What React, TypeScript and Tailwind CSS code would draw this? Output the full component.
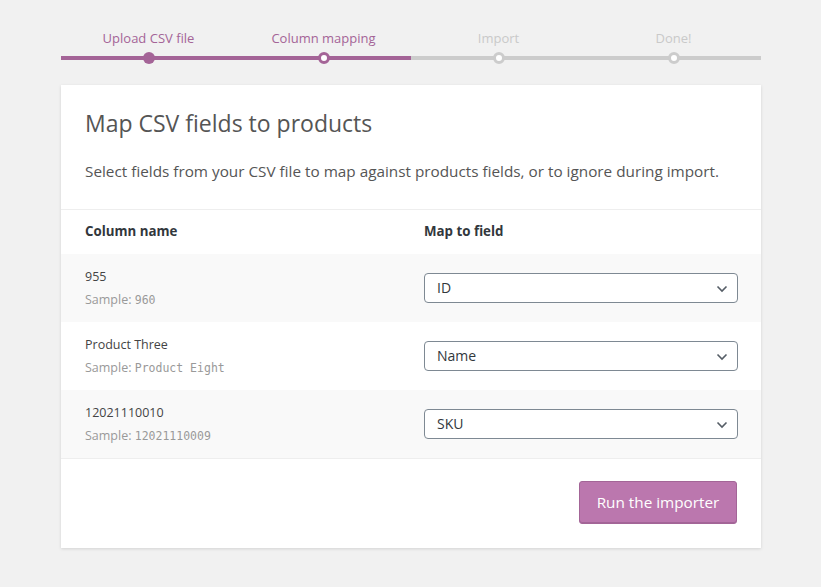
import React from "react";

const steps = [
  { label: "Upload CSV file", state: "done" },
  { label: "Column mapping", state: "active" },
  { label: "Import", state: "todo" },
  { label: "Done!", state: "todo" },
];

const rows = [
  { name: "955", sample: "960", field: "ID", bg: "bg-[#f9f9f9]" },
  { name: "Product Three", sample: "Product Eight", field: "Name", bg: "bg-white" },
  { name: "12021110010", sample: "12021110009", field: "SKU", bg: "bg-[#f9f9f9]" },
];

function Chevron() {
  return (
    <svg width="12" height="8" viewBox="0 0 12 8" className="absolute right-[9px] top-[11px]">
      <path d="M1.5 1.5 L6 6 L10.5 1.5" fill="none" stroke="#555d66" strokeWidth="1.6" />
    </svg>
  );
}

export default function App() {
  return (
    <div className="min-h-[587px] w-[821px] bg-[#f1f1f1] font-['Open_Sans',sans-serif] pt-[29px]">
      <div className="mx-[61px] w-[700px]">
        <div className="flex">
          {steps.map((s, i) => (
            <div key={i} className="flex w-[175px] flex-col items-center">
              <div
                className={`h-[18px] text-[13px] leading-[18px] ${
                  s.state === "todo" ? "text-[#c9c9c9]" : "text-[#a46497]"
                }`}
              >
                {s.label}
              </div>
              <div className="relative mt-[9px] h-[4px] w-full">
                <div
                  className={`h-[4px] w-full ${
                    s.state === "todo" ? "bg-[#cccccc]" : "bg-[#a46497]"
                  }`}
                />
                {s.state === "done" && (
                  <div className="absolute left-1/2 top-1/2 h-[12px] w-[12px] -translate-x-1/2 -translate-y-1/2 rounded-full bg-[#a46497]" />
                )}
                {s.state === "active" && (
                  <div className="absolute left-1/2 top-1/2 h-[12px] w-[12px] -translate-x-1/2 -translate-y-1/2 rounded-full border-[3px] border-[#a46497] bg-white" />
                )}
                {s.state === "todo" && (
                  <div className="absolute left-1/2 top-1/2 h-[12px] w-[12px] -translate-x-1/2 -translate-y-1/2 rounded-full border-[3px] border-[#cccccc] bg-white" />
                )}
              </div>
            </div>
          ))}
        </div>

        <div className="mt-[25px] bg-white shadow-[0_1px_3px_rgba(0,0,0,0.13)]">
          <div className="border-b border-[#eeeeee] px-6 pt-[22px] pb-[27px]">
            <h1 className="text-[23px] leading-[32px] font-normal text-[#555555]">
              Map CSV fields to products
            </h1>
            <p className="mt-[21px] text-[15.3px] leading-[22px] text-[#555555]">
              Select fields from your CSV file to map against products fields, or to ignore during import.
            </p>
          </div>

          <div className="flex h-[44px] items-center text-[13.3px] font-bold text-[#32373c]">
            <div className="w-[363px] pl-6">Column name</div>
            <div>Map to field</div>
          </div>

          {rows.map((r, i) => (
            <div key={i} className={`flex h-[68px] items-center ${r.bg}`}>
              <div className="w-[363px] pl-6">
                <div className="text-[12.5px] leading-[18px] text-[#444444]">{r.name}</div>
                <div className="mt-[5px] text-[12.5px] leading-[18px] text-[#999999]">
                  Sample:{" "}
                  <span className="font-['DejaVu_Sans_Mono',monospace] text-[11.5px]">
                    {r.sample}
                  </span>
                </div>
              </div>
              <div className="relative h-[30px] w-[314px] rounded-[4px] border border-[#7e8993] bg-white">
                <div className="pl-[12px] text-[14px] leading-[28px] text-[#32373c]">{r.field}</div>
                <Chevron />
              </div>
            </div>
          ))}

          <div className="flex justify-end border-t border-[#eeeeee] px-6 pt-[22px] pb-[24px]">
            <button className="h-[43px] w-[158px] rounded-[3px] border border-[#a36597] bg-[#bb77ae] text-[15.3px] text-white shadow-[inset_0_-1px_0_#a36597]">
              Run the importer
            </button>
          </div>
        </div>
      </div>
    </div>
  );
}
